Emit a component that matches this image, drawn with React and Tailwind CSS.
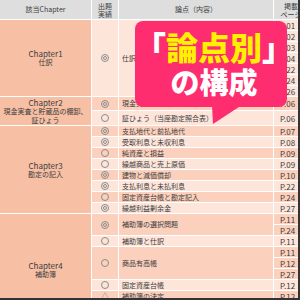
const chapters = [
  { title: "Chapter1", sub: ["仕訳"], rows: [
    { mark: "◎", text: "仕訳", h: "h-[11px]", pages: ["P.01", "P.02", "P.03", "P.04", "P.22", "P.24", "P.26"] },
  ] },
  { title: "Chapter2", sub: ["現金実査と貯蔵品の棚卸、", "証ひょう"], rows: [
    { mark: "◎", text: "現金実査と貯蔵品の棚卸", h: "h-[14px]", pages: ["P.06"] },
    { mark: "○", text: "証ひょう（当座勘定照合表）", h: "h-[15px]", pages: ["P.06"] },
  ] },
  { title: "Chapter3", sub: ["勘定の記入"], rows: [
    { mark: "◎", text: "支払地代と前払地代", h: "h-[11px]", pages: ["P.07"] },
    { mark: "◎", text: "受取利息と未収利息", h: "h-[11px]", pages: ["P.08"] },
    { mark: "○", text: "純資産と損益", h: "h-[11px]", pages: ["P.09"] },
    { mark: "○", text: "繰越商品と売上原価", h: "h-[11px]", pages: ["P.09"] },
    { mark: "◎", text: "建物と減価償却", h: "h-[11px]", pages: ["P.10"] },
    { mark: "◎", text: "支払利息と未払利息", h: "h-[11px]", pages: ["P.22"] },
    { mark: "○", text: "固定資産台帳と勘定記入", h: "h-[11px]", pages: ["P.24"] },
    { mark: "◎", text: "繰越利益剰余金", h: "h-[11px]", pages: ["P.27"] },
  ] },
  { title: "Chapter4", sub: ["補助簿"], rows: [
    { mark: "◎", text: "補助簿の選択問題", h: "h-[11px]", pages: ["P.11", "P.24"] },
    { mark: "○", text: "補助簿と仕訳", h: "h-[11px]", pages: ["P.11"] },
    { mark: "○", text: "商品有高帳", h: "h-[11px]", pages: ["P.11", "P.12", "P.27"] },
    { mark: "○", text: "固定資産台帳", h: "h-[11px]", pages: ["P.12"] },
    { mark: "△", text: "補助簿の決定", h: "h-[11px]", pages: ["P.12"] },
    { mark: "○", text: "売掛金元帳", h: "h-[12px]", pages: ["P.13"] },
    { mark: "○", text: "買掛金元帳", h: "h-[12px]", pages: ["P.13"] },
  ] },
];

// alternate row shading across the whole table
let idx = 0;
chapters.forEach((c) => c.rows.forEach((r) => { r.dark = idx++ % 2 === 1; }));

function Mark({ m }) {
  if (m === "△") return <span className="text-[8px] leading-none text-[#808080]">△</span>;
  return <span className="flex h-[8px] w-[8px] items-center justify-center rounded-full border border-[#8c8c8c]">
    {m === "◎" && <span className="h-[4px] w-[4px] rounded-full border border-[#8c8c8c]" />}
  </span>;
}

function Row({ row }) {
  const bg = row.dark ? "bg-[#fbd0bd]" : "bg-[#fde5da]";
  return <div className={`flex ${bg}`}>
    <div className="flex w-[27px] shrink-0 items-center justify-center border-r border-b border-white"><Mark m={row.mark} /></div>
    <div className="flex w-[155px] shrink-0 items-center whitespace-nowrap border-r border-b border-white pl-[3px]">{row.text}</div>
    <div className="flex w-[40px] flex-col">{row.pages.map((p, i) => <div key={i} className={`flex items-center border-b border-white pl-[6px] text-[8px] ${row.h}`}>{p}</div>)}</div>
  </div>;
}

export default function App() {
  return <div className="relative h-[300px] w-[300px] overflow-hidden border-r-2 border-b-2 border-[#333] bg-white font-['Noto_Sans_CJK_JP',sans-serif] text-[7px] leading-[9px] text-[#3c3c3c]">
    <div className="flex h-[20px] border-b border-white bg-[#dedede]">
      <div className="flex w-[92px] shrink-0 items-center justify-center border-r border-white">該当Chapter</div>
      <div className="flex w-[27px] shrink-0 flex-col items-center justify-center border-r border-white leading-[8px]"><span>出題</span><span>実績</span></div>
      <div className="flex w-[155px] shrink-0 items-center justify-center border-r border-white">論点（内容）</div>
      <div className="flex w-[34px] shrink-0 flex-col items-center justify-center leading-[8px]"><span>掲載</span><span>ページ</span></div>
    </div>
    {chapters.map((c) => <div key={c.title} className="flex">
      <div className="flex w-[92px] shrink-0 flex-col items-center justify-center border-r border-b border-white bg-[#f7bfa4] text-center">
        <span className="text-[8px]">{c.title}</span>{c.sub.map((s) => <span key={s}>{s}</span>)}
      </div>
      <div className="flex flex-col">{c.rows.map((r) => <Row key={r.text} row={r} />)}</div>
    </div>)}

    <div className="absolute left-[135px] top-[21px] flex h-[86px] w-[152px] flex-col items-center rounded-[8px] bg-[#fe2d6f] pl-[6px] pt-[8px] font-black">
      <div className="whitespace-nowrap text-[32px] leading-[35px] text-[#fff100]"><span className="text-white">「</span>論点別<span className="text-white">」</span></div>
      <div className="whitespace-nowrap text-[29px] leading-[35px] text-white">の構成</div>
    </div>
    <svg className="absolute left-[200px] top-[100px]" width="50" height="30" viewBox="0 0 50 30">
      <polygon points="12,5 42,5 13,24" fill="#fe2d6f" />
    </svg>
  </div>;
}
